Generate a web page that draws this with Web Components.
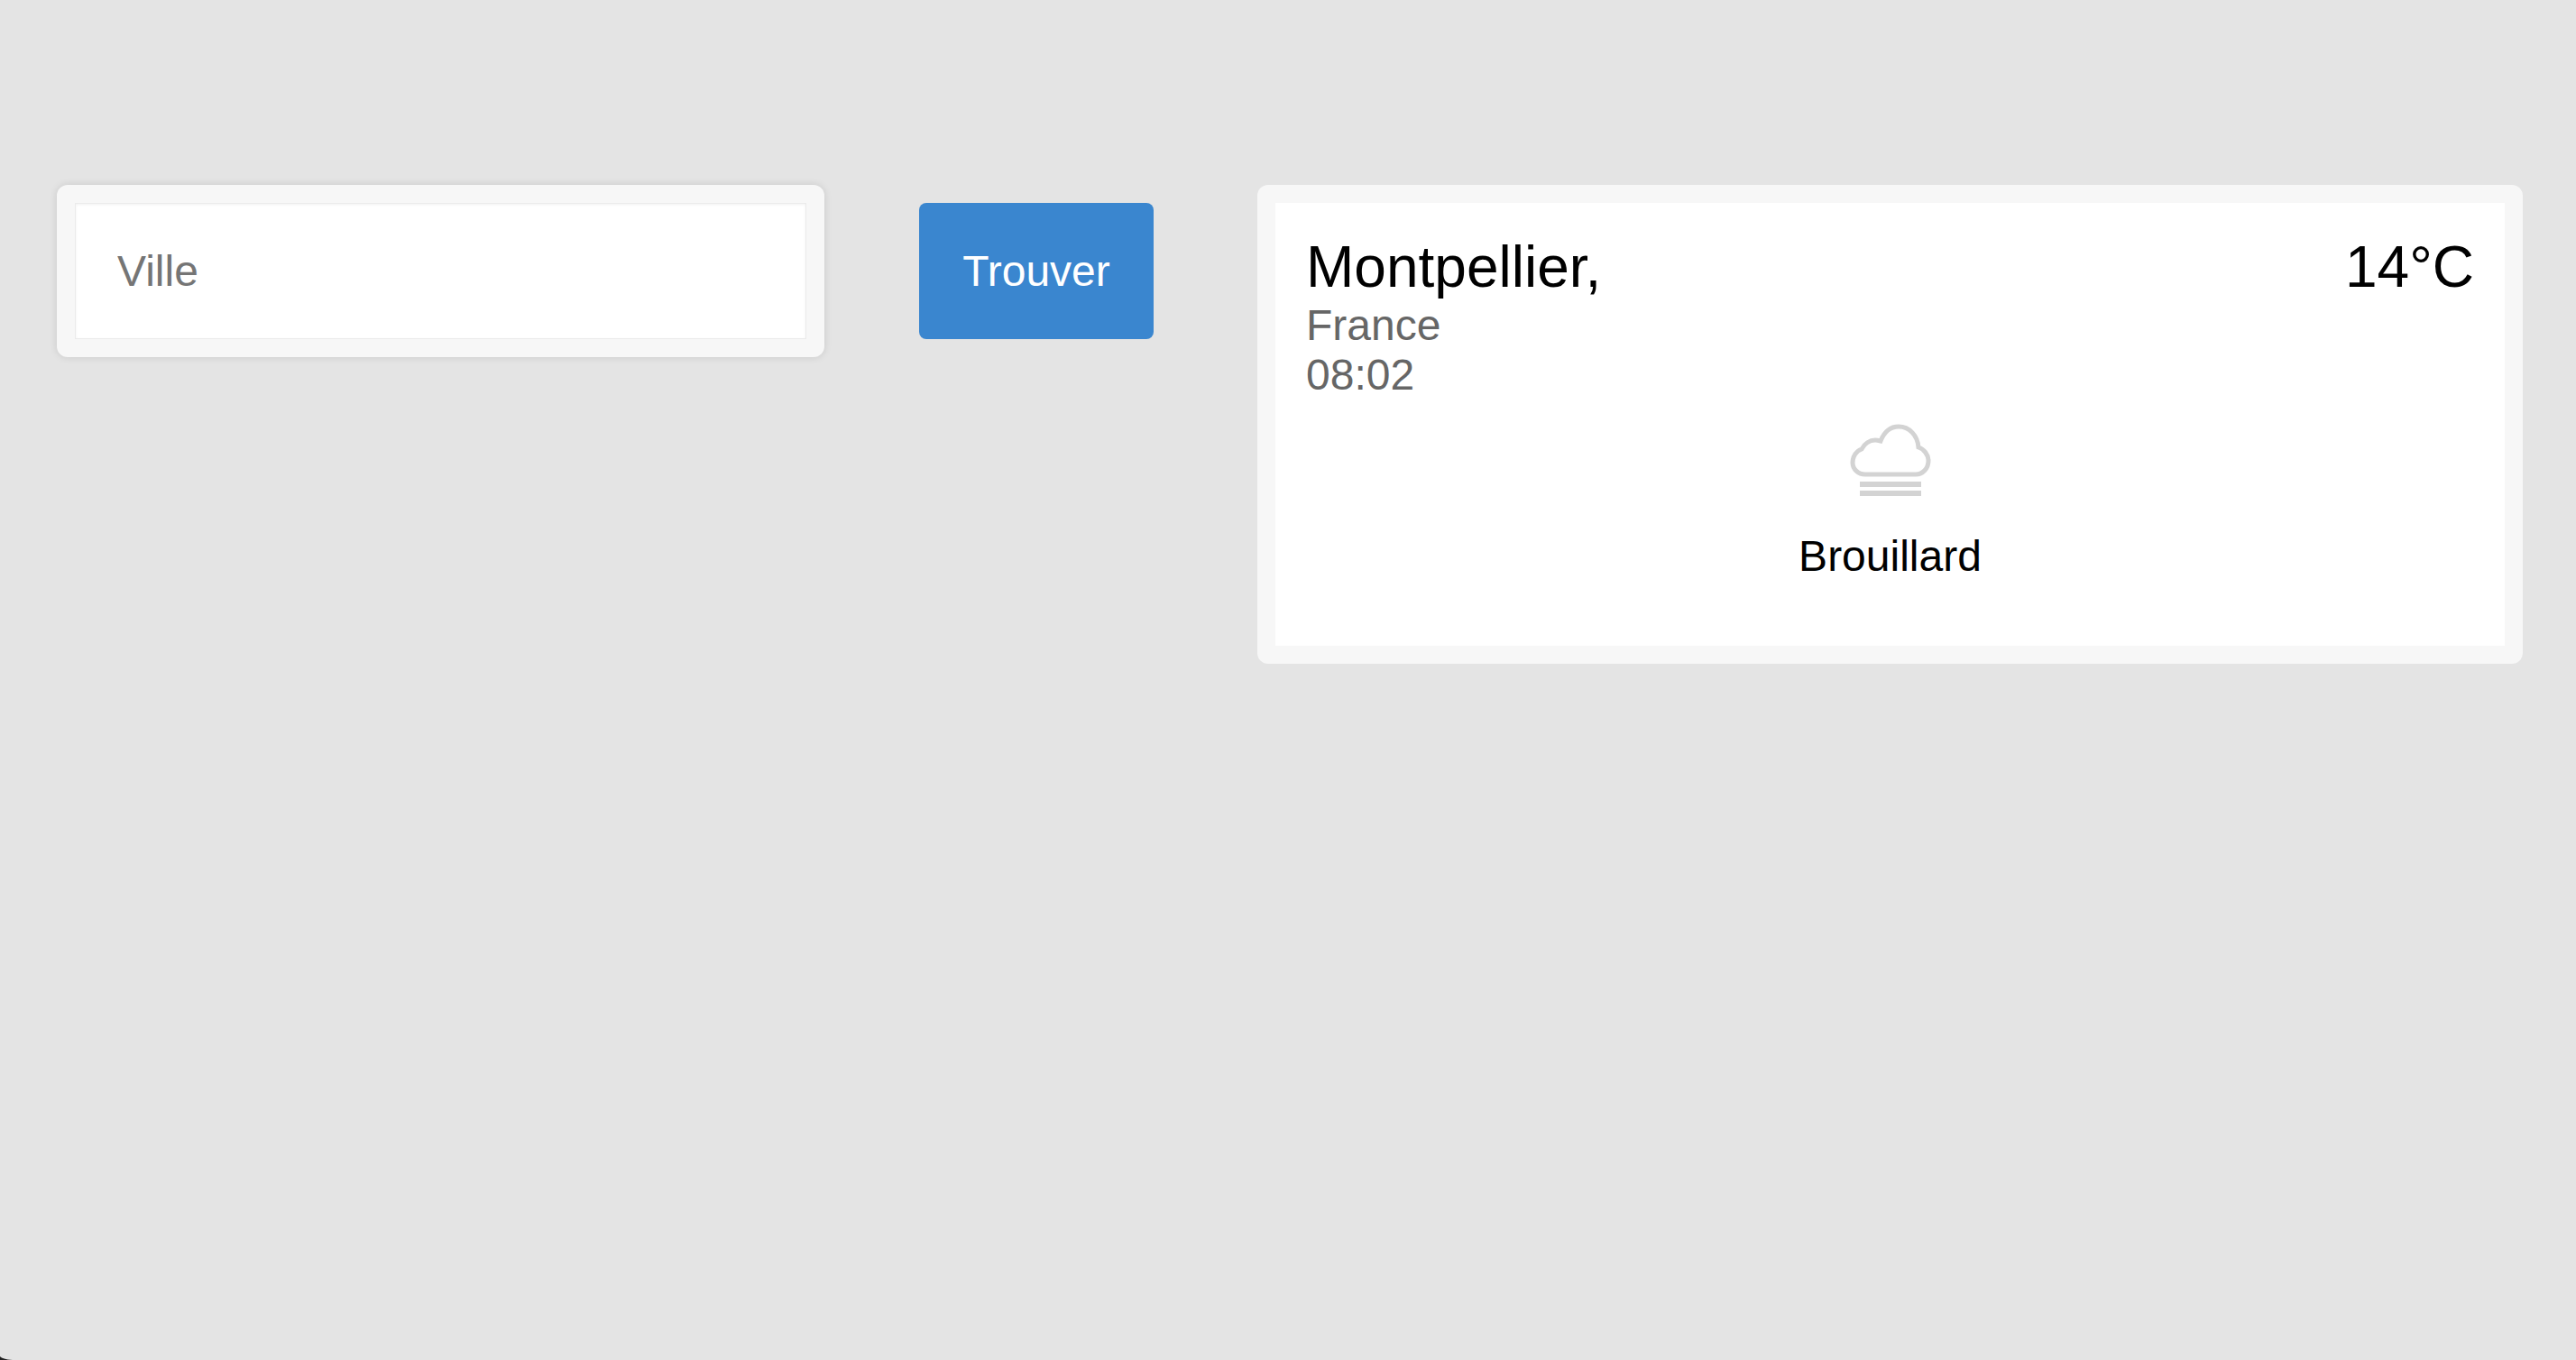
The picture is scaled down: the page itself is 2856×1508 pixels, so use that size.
<!DOCTYPE html>
<html lang="fr">
<head>
<meta charset="utf-8">
<title>Météo</title>
<style>
  html, body { margin: 0; height: 100%; background: #e4e4e4; }
  body { font-family: "Liberation Sans", Arial, sans-serif; }
</style>
</head>
<body>
<weather-app>
  <search-form slot="search" placeholder="Ville" label="Trouver"></search-form>
  <weather-card slot="result" city="Montpellier," country="France" time="08:02" temp="14°C" desc="Brouillard"></weather-card>
</weather-app>
<window-corner></window-corner>

<script>
class WeatherApp extends HTMLElement {
  constructor() {
    super()
    this.attachShadow({ mode: 'open' })
    this.shadowRoot.innerHTML = `
      <style>
        :host {
          display: flex;
          align-items: flex-start;
          box-sizing: border-box;
          height: 1508px;
          padding: 205px 59px 0 63px;
        }
        .search { flex: 0 0 1216px; width: 1216px; margin-right: 115px; }
        .result { flex: 1; min-width: 0; }
      </style>
      <div class="search"><slot name="search"></slot></div>
      <div class="result"><slot name="result"></slot></div>
    `
  }
}

class SearchForm extends HTMLElement {
  constructor() {
    super()
    this.attachShadow({ mode: 'open' })
  }
  connectedCallback() {
    this.shadowRoot.innerHTML = `
      <style>
        :host { display: flex; align-items: flex-start; }
        .field {
          box-sizing: border-box;
          width: 851px;
          height: 191px;
          padding: 20px;
          background: #f7f7f7;
          border-radius: 12px;
          box-shadow: 0 0 8px rgba(0, 0, 0, .12);
        }
        input {
          display: block;
          box-sizing: border-box;
          width: 100%;
          height: 151px;
          padding: 0 46px;
          border: 1px solid #ebebeb;
          outline: 0;
          background: #fff;
          box-shadow: inset 0 1px 3px rgba(0, 0, 0, .06);
          font: 48px "Liberation Sans", Arial, sans-serif;
        }
        input::placeholder { color: #757575; opacity: 1; }
        button {
          box-sizing: border-box;
          width: 260px;
          height: 151px;
          margin: 20px 0 0 105px;
          border: 0;
          border-radius: 8px;
          background: #3a86cf;
          color: #fff;
          font: 48px "Liberation Sans", Arial, sans-serif;
        }
      </style>
      <div class="field"><input type="text" placeholder="${this.getAttribute('placeholder')}"></div>
      <button type="button">${this.getAttribute('label')}</button>
    `
  }
}

class WeatherCard extends HTMLElement {
  constructor() {
    super()
    this.attachShadow({ mode: 'open' })
  }
  connectedCallback() {
    this.shadowRoot.innerHTML = `
      <style>
        :host {
          display: block;
          box-sizing: border-box;
          height: 531px;
          padding: 20px;
          background: #f7f7f7;
          border-radius: 12px;
        }
        .inner {
          box-sizing: border-box;
          height: 491px;
          padding: 34px 34px 0;
          background: #fff;
        }
        .top { display: flex; justify-content: space-between; }
        .city, .temp { font-size: 64px; line-height: 74px; color: #000; }
        .sub { font-size: 48px; line-height: 55px; color: #666; }
        .sky { display: flex; flex-direction: column; align-items: center; margin-top: 22px; }
        svg { display: block; width: 100px; height: 92px; }
        .desc { margin-top: 32px; font-size: 48px; line-height: 55px; color: #000; }
      </style>
      <div class="inner">
        <div class="top">
          <div>
            <div class="city">${this.getAttribute('city')}</div>
            <div class="sub">${this.getAttribute('country')}</div>
            <div class="sub">${this.getAttribute('time')}</div>
          </div>
          <div class="temp">${this.getAttribute('temp')}</div>
        </div>
        <div class="sky">
          <svg viewBox="0 0 100 92" fill="none" stroke="#d3d3d3" stroke-width="5">
            <path d="M22 61C14 61 8 55 8 48C8 41 12 35 18 33C21 27 27 23 33 23C35 23 37 23.500 39 24C43 14 50 8 59 8C71 8 80 18 81 31C87 33 92 39 92 46C92 54 86 61 78 61Z"/>
            <path d="M16 72H84M16 82H84" stroke-width="6"/>
          </svg>
          <div class="desc">${this.getAttribute('desc')}</div>
        </div>
      </div>
    `
  }
}

// dark rounded corner of the browser window, bottom left
class WindowCorner extends HTMLElement {
  constructor() {
    super()
    this.attachShadow({ mode: 'open' })
    this.shadowRoot.innerHTML = `
      <style>
        :host { position: fixed; left: 0; bottom: 0; display: block; width: 14px; height: 4px; }
        svg { display: block; width: 14px; height: 4px; }
      </style>
      <svg viewBox="0 0 14 4"><path d="M0 0C2 2 6 3.500 14 4H0Z" fill="#222"/></svg>
    `
  }
}

customElements.define('weather-app', WeatherApp)
customElements.define('search-form', SearchForm)
customElements.define('weather-card', WeatherCard)
customElements.define('window-corner', WindowCorner)
</script>
</body>
</html>
